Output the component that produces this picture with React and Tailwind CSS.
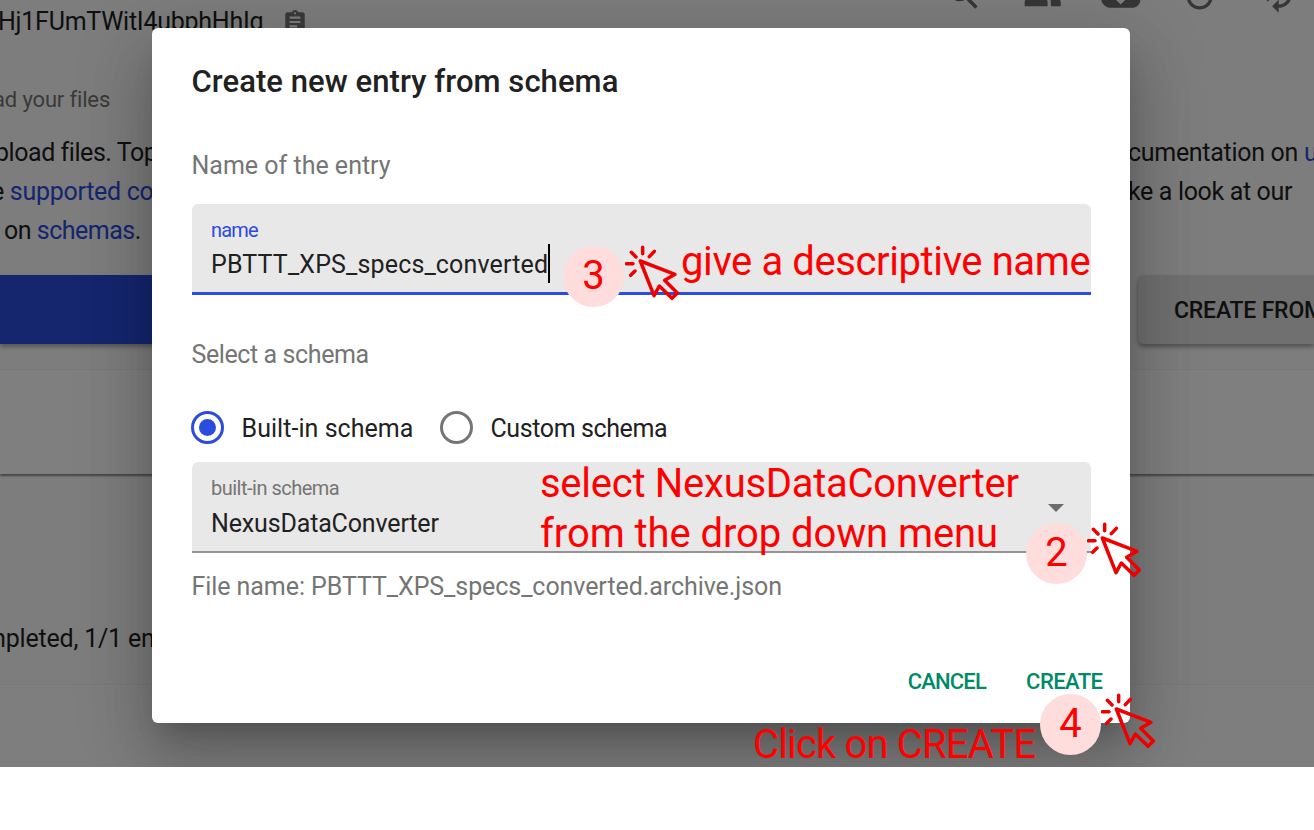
import {
  MdSearch,
  MdPeople,
  MdCloudDownload,
  MdReplay,
  MdAutorenew,
  MdAssignment,
} from "react-icons/md";

function ClickCursor({ className }) {
  return (
    <svg
      viewBox="225 45 165 168"
      fill="none"
      stroke="#ee0000"
      strokeWidth="10.5"
      className={`absolute h-[56px] w-[55px] ${className}`}
    >
      <path d="M271 93 L375 133 L344 151 L382 189 L366 205 L328 168 L312 197 Z" strokeLinejoin="round" />
      <path d="M278 52 V71 M244 67 L258 81 M229 101 H249 M242 136 L255 123 M298 80 L313 64" strokeLinecap="round" />
    </svg>
  );
}

function StepBadge({ number, className }) {
  return (
    <div
      className={`absolute flex size-[61px] items-center justify-center rounded-full bg-[#ffdddd] pb-[1px] text-[40px] leading-none text-[#ff0000] ${className}`}
    >
      {number}
    </div>
  );
}

function Note({ className, children }) {
  return (
    <p className={`absolute text-[40px] leading-[50px] whitespace-nowrap text-[#ff0000] ${className}`}>
      {children}
    </p>
  );
}

function UploadPage() {
  return (
    <div className="flex h-full flex-col overflow-hidden bg-[#fafafa] text-[25px] whitespace-nowrap text-[#1f1f1f]">
      <header className="flex h-[42px] shrink-0 justify-between">
        <div className="flex items-center pt-[2px]">
          <span className="-ml-[2px] w-[284px] tracking-[-0.25px]">Hj1FUmTWitI4ubphHhIg</span>
          <MdAssignment className="size-[26px] text-[#757575]" />
        </div>
        <div className="-mt-[25px] mr-[16px] flex gap-[39.3px] text-[39.4px] text-[#6c6c6c]">
          <MdSearch />
          <MdPeople />
          <MdCloudDownload />
          <MdReplay />
          <MdAutorenew />
        </div>
      </header>
      <p className="mt-[43px] -ml-[7px] h-[30px] text-[22px] leading-[30px] tracking-[-0.15px] text-[#757575]">ad your files</p>
      <div className="mt-[18px] grid grid-cols-[1129px_1fr] leading-[39px]">
        <p className="-ml-[5px] tracking-[-0.45px]">pload files. Top</p>
        <p className="-ml-[1px] tracking-[-0.3px]">
          cumentation on <span className="text-[#2a4cdf]">u</span>
        </p>
        <p className="-ml-[9px] tracking-[-0.3px]">
          e <span className="text-[#2a4cdf]">supported co</span>
        </p>
        <p className="-ml-[1px] tracking-[-0.35px]">ke a look at our</p>
        <p className="ml-[4px] tracking-[-0.5px]">
          on <span className="text-[#2a4cdf]">schemas</span>.
        </p>
      </div>
      <div className="mt-[25px] flex h-[69px] shrink-0 justify-between">
        <div className="w-[400px] bg-[#2a4cdf] shadow-[0_3px_4px_rgba(0,0,0,0.3)]" />
        <div className="flex w-[176px] items-center rounded-l-md bg-[#e0e0e0] pt-[3px] pl-[36px] text-[23px] font-medium tracking-[-0.2px] shadow-[0_3px_4px_rgba(0,0,0,0.35)]">
          CREATE FROM
        </div>
      </div>
      <div className="mt-[25px] h-[105px] shrink-0 border-t border-[#f2f2f2] bg-white shadow-[0_2px_2px_rgba(0,0,0,0.45)]" />
      <div className="mt-[1px] flex h-[210px] shrink-0 flex-col justify-end border-b border-[#f2f2f2]">
        <p className="-ml-[16px] h-[65px] leading-[39px] tracking-[-0.2px]">mpleted, 1/1 en</p>
      </div>
      <div className="grow bg-[#fdfdfd]" />
    </div>
  );
}

function Radio({ checked, children }) {
  return (
    <label className="flex items-center gap-[18px]">
      <span
        className={`flex size-[33px] items-center justify-center rounded-full border-[3.4px] ${
          checked ? "border-[#2a4cdf]" : "border-[#757575]"
        }`}
      >
        {checked && <span className="size-[17px] rounded-full bg-[#2a4cdf]" />}
      </span>
      {children}
    </label>
  );
}

function EntryDialog() {
  return (
    <section className="flex h-[695px] w-[978px] flex-col rounded-[6px] bg-white px-[39.5px] pt-[34px] text-[25px] leading-[40px] whitespace-nowrap text-[#212121] shadow-[0_18px_25px_-11px_rgba(0,0,0,0.2),0_39px_62px_5px_rgba(0,0,0,0.14),0_15px_75px_13px_rgba(0,0,0,0.12)]">
      <h2 className="text-[31px] font-medium tracking-[0.06px]">Create new entry from schema</h2>
      <p className="mt-[44px] text-[#757575]">Name of the entry</p>
      <div className="mt-[18px] h-[91px] rounded-t-[6px] border-b-[3px] border-[#2a4cdf] bg-[#e8e8e8] px-[19.5px] pt-[16px]">
        <p className="h-[20px] text-[20px] leading-[20px] tracking-[-0.8px] text-[#2a4cdf]">name</p>
        <div className="mt-[4px] flex">
          <span className="pt-px tracking-[0.15px]">PBTTT_XPS_specs_converted</span>
          <span className="h-[39px] w-[1.5px] bg-black" />
        </div>
      </div>
      <p className="mt-[40px] tracking-[-0.4px] text-[#757575]">Select a schema</p>
      <div className="mt-[32px] -ml-[1px] flex gap-[25px]">
        <Radio checked>
          <span className="w-[173px] pt-[3px] leading-[37px] tracking-[0.05px]">Built-in schema</span>
        </Radio>
        <Radio>
          <span className="pt-[3px] leading-[37px] tracking-[-0.4px]">Custom schema</span>
        </Radio>
      </div>
      <div className="mt-[15px] flex h-[91px] shrink-0 items-center justify-between rounded-t-[6px] border-b-[2px] border-[#949494] bg-[#e8e8e8] pr-[27px] pl-[19.5px]">
        <div className="pt-[8px]">
          <p className="h-[20px] text-[20px] leading-[20px] tracking-[-0.5px] text-[#757575]">
            built-in schema
          </p>
          <p className="mt-[6px] tracking-[-0.15px]">NexusDataConverter</p>
        </div>
        <svg viewBox="0 0 16 8" className="mt-[3px] h-[8px] w-[16px] fill-[#6c6c6c]">
          <path d="M0 0H16L8 8Z" />
        </svg>
      </div>
      <p className="mt-[14px] tracking-[-0.07px] text-[#757575]">File name: PBTTT_XPS_specs_converted.archive.json</p>
      <div className="mt-[55px] -mr-[12px] flex justify-end gap-[40px] text-[22px] font-medium text-[#008a67]">
        <button className="tracking-[-0.8px]">CANCEL</button>
        <button className="tracking-[-0.55px]">CREATE</button>
      </div>
    </section>
  );
}

export default function App() {
  return (
    <main className="relative h-[830px] w-[1314px] overflow-hidden bg-white font-['Roboto',sans-serif]">
      <div className="relative h-[767px] overflow-hidden">
        <UploadPage />
        <div className="absolute inset-0 flex items-start bg-black/50 pt-[28px] pl-[152px]">
          <EntryDialog />
        </div>
      </div>
      <Note className="top-[237px] left-[681px] tracking-[-0.4px]">give a descriptive name</Note>
      <Note className="top-[459px] left-[540px]">
        <span className="tracking-[-0.27px]">select NexusDataConverter</span>
        <br />
        <span className="tracking-[-0.08px]">from the drop down menu</span>
      </Note>
      <Note className="top-[720px] left-[753px] tracking-[-0.85px]">Click on CREATE</Note>
      <StepBadge number="3" className="top-[246px] left-[563px]" />
      <ClickCursor className="top-[245px] left-[625px]" />
      <StepBadge number="2" className="top-[523px] left-[1026px]" />
      <ClickCursor className="top-[522px] left-[1087px]" />
      <StepBadge number="4" className="top-[694px] left-[1040px]" />
      <ClickCursor className="top-[693px] left-[1101px]" />
    </main>
  );
}
